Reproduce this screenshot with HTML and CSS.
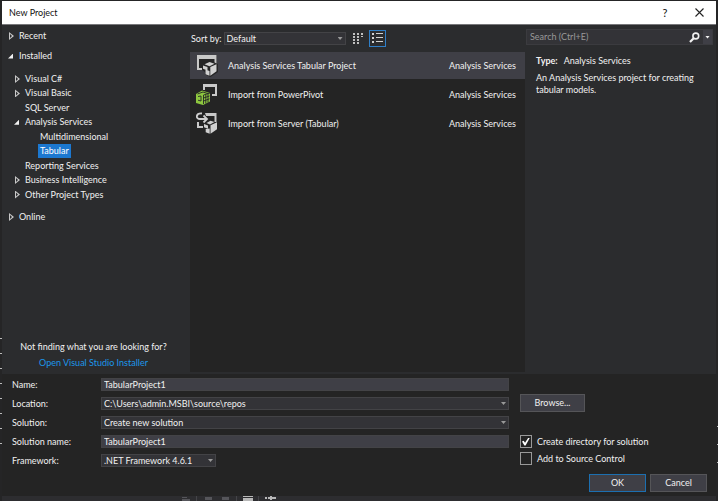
FILE: index.html
```html
<!DOCTYPE html>
<html lang="en">
<head>
    <meta charset="UTF-8">
    <meta name="viewport" content="width=device-width, initial-scale=1.0">
    <title>New Project</title>
    <link rel="stylesheet" href="styles.css">
</head>
<body>

<form class="dialog" id="newProjectForm">
    <header class="titlebar">
        <h1>New Project</h1>
        <button type="button" class="title-button" aria-label="Help">?</button>
        <button type="button" class="title-button" aria-label="Close">
            <svg width="9" height="9" viewBox="0 0 9 9"><path d="M.5.5l8 8M8.5.5l-8 8" fill="none" stroke="#222" stroke-width="1.1"/></svg>
        </button>
    </header>

    <div class="main">
        <nav class="sidebar">
            <button type="button" class="node closed">Recent</button>
            <button type="button" class="node open">Installed</button>
            <ul class="tree">
                <li><button type="button" class="node closed">Visual C#</button></li>
                <li><button type="button" class="node closed">Visual Basic</button></li>
                <li><button type="button" class="node">SQL Server</button></li>
                <li><button type="button" class="node open">Analysis Services</button></li>
                <li class="child"><button type="button" class="node">Multidimensional</button></li>
                <li class="child"><button type="button" class="node"><span class="selected">Tabular</span></button></li>
                <li><button type="button" class="node">Reporting Services</button></li>
                <li><button type="button" class="node closed">Business Intelligence</button></li>
                <li><button type="button" class="node closed">Other Project Types</button></li>
            </ul>
            <button type="button" class="node closed">Online</button>

            <div class="installer">
                <p>Not finding what you are looking for?</p>
                <a href="#">Open Visual Studio Installer</a>
            </div>
        </nav>

        <section class="templates">
            <div class="toolbar">
                <label for="sort_by">Sort by:</label>
                <div class="select sort">
                    <select id="sort_by" name="sort_by">
                        <option>Default</option>
                    </select>
                </div>
                <button type="button" class="view-button" aria-label="Small icons">
                    <svg width="11" height="11" viewBox="0 0 11 11" fill="#c0c0c0"><path d="M0 0h2v2H0zM4 0h2v2H4zM8 0h2v2H8zM0 3h2v2H0zM4 3h2v2H4zM8 3h2v1H8zM0 6h2v2H0zM4 6h2v2H4zM0 9h2v2H0zM4 9h2v2H4z"/></svg>
                </button>
                <button type="button" class="view-button active" aria-label="List">
                    <svg width="11" height="11" viewBox="0 0 11 11" fill="#d0d0d0"><path d="M0 0h2v2H0zM0 4h2v2H0zM0 8h2v2H0zM4 0h7v1H4zM4 4h7v1H4zM4 8h7v1H4z"/></svg>
                </button>
            </div>
            <ul class="template-list">
                <li>
                    <button type="button" class="template active">
                        <svg class="icon" width="22" height="23" viewBox="0 0 22 23">
                            <path d="M1 1h20v14H1z" fill="#252526"/>
                            <path d="M1 1h19.500v10h-2V5H3v9h4v2H1z" fill="#c8c8c8"/>
                            <path d="M6 10l7.500-3.500L22 10v8l-7.500 5L9 20.500V18l-3-2z" fill="#252526"/>
                            <path d="M8.500 10.300l5-2.300 5 1.700-5 2.600zM7 11.500l4.500 1.600v3.400L7 14.800zM14.300 13l6.200-2.800v7l-6.200 4.600z" fill="#d0d0d0"/>
                            <path d="M9.500 15.500l4 1.500v4.800l-4-1.600z" fill="#d0d0d0"/>
                        </svg>
                        <span class="name">Analysis Services Tabular Project</span>
                        <span>Analysis Services</span>
                    </button>
                </li>
                <li>
                    <button type="button" class="template">
                        <svg class="icon" width="22" height="23" viewBox="0 0 22 23">
                            <path d="M7 1h14v12h-5v-2h3V4H9v3H7z" fill="#c8c8c8"/>
                            <path d="M0 11l6-3.500L14 10v8.500L7 22l-7-2z" fill="#8dc63f"/>
                            <path d="M1.500 11L7 9l5 1.600M7.500 12L14 10M7.500 12v9M9.800 11.500v9M12 11v8.500M7.500 15l6-2M7.500 18l6-2.200M2 13.500l3-.5v5l-3-.8" fill="none" stroke="#252526" stroke-width=".9"/>
                        </svg>
                        <span class="name">Import from PowerPivot</span>
                        <span>Analysis Services</span>
                    </button>
                </li>
                <li>
                    <button type="button" class="template">
                        <svg class="icon" width="22" height="23" viewBox="0 0 22 23">
                            <path d="M9 1h11.500v9h-2V4H10zM1 10h2v4h4v2H1z" fill="#c8c8c8"/>
                            <path d="M6 1.500C-.5 1-.5 7 4 7h6M7.500 3.500L11 7l-3.500 3.500" fill="none" stroke="#d0d0d0" stroke-width="1.800"/>
                            <path d="M10.500 11l4-2.300 4 1.400-4.500 2.500zM8 12l4 1.500v3.300l-4-1.600zM14.500 13.200l6.500-3v7l-6.500 4.500z" fill="#d0d0d0"/>
                            <path d="M9.700 17l4-.500v5.300l-4-1.600z" fill="#d0d0d0"/>
                        </svg>
                        <span class="name">Import from Server (Tabular)</span>
                        <span>Analysis Services</span>
                    </button>
                </li>
            </ul>
        </section>

        <aside class="details">
            <div class="search">
                <input type="search" placeholder="Search (Ctrl+E)" aria-label="Search">
                <button type="button" class="search-button" aria-label="Search">
                    <svg width="11" height="11" viewBox="0 0 11 11" fill="none" stroke="#f1f1f1"><circle cx="6.800" cy="4" r="2.900" stroke-width="1.600"/><path d="M4.700 6.200L1 10" stroke-width="2.200"/></svg>
                </button>
                <button type="button" class="search-menu" aria-label="Search options"></button>
            </div>
            <div class="description">
                <p><strong>Type:</strong> Analysis Services</p>
                <p>An Analysis Services project for creating tabular models.</p>
            </div>
        </aside>
    </div>

    <div class="settings">
        <div class="fields">
            <label for="name">Name:</label>
            <input type="text" id="name" name="name" value="TabularProject1">

            <label for="location">Location:</label>
            <div class="select">
                <select id="location" name="location">
                    <option>C:\Users\admin.MSBI\source\repos</option>
                </select>
            </div>

            <label for="solution">Solution:</label>
            <div class="select">
                <select id="solution" name="solution">
                    <option>Create new solution</option>
                </select>
            </div>

            <label for="solution_name">Solution name:</label>
            <input type="text" id="solution_name" name="solution_name" value="TabularProject1">

            <label for="framework">Framework:</label>
            <div class="select framework">
                <select id="framework" name="framework">
                    <option>.NET Framework 4.6.1</option>
                </select>
            </div>
        </div>

        <div class="actions">
            <button type="button" class="button browse">Browse...</button>
            <label class="check"><input type="checkbox" name="create_directory" checked> Create directory for solution</label>
            <label class="check"><input type="checkbox" name="source_control"> Add to Source Control</label>
            <div class="buttons">
                <button type="submit" class="button primary">OK</button>
                <button type="button" class="button">Cancel</button>
            </div>
        </div>
    </div>
</form>

<!-- Editor toolbar showing under the dialog -->
<div class="backdrop">
    <svg width="110" height="5" viewBox="0 0 110 5">
        <path d="M4 1h5v1H4zM4 3h8v2H4zM27 1h7v3h-7zM44 1h7v3h-7z" fill="#55555a"/>
        <path d="M65 0h10v1H65zM65 2h10v3H65zM87 1h2v2h-2zM90 1h8v2h-8zM92 0h2v4h-2z" fill="#b8b8b8"/>
        <path d="M18 0h1v5h-1zM58 0h1v5h-1zM80 0h1v5h-1z" fill="#444448"/>
    </svg>
</div>

<script>
    // Nothing is created here, keep the dialog on screen
    document.getElementById('newProjectForm').onsubmit = function(e) {
        e.preventDefault();
    };
</script>

</body>
</html>
```
FILE: styles.css
```css
/* Global styles */

* {
  box-sizing: border-box;
  margin: 0;
  padding: 0;
}

body {
  display: flex;
  flex-direction: column;
  min-height: 100vh;
  padding: 1px 2px 0;
  font-family: Lato, "Segoe UI", sans-serif;
  font-size: 9px;
  line-height: 12px;
  color: #f1f1f1;
  /* Editor lines showing at the left and right of the dialog */
  background:
    repeating-linear-gradient(#bbb 0 1px, transparent 1px 15px) left bottom 55px / 2px 108px no-repeat,
    repeating-linear-gradient(#bbb 0 1px, transparent 1px 18px) right bottom 37px / 1px 38px no-repeat,
    #252526;
}

button, input, select {
  font: inherit;
  color: inherit;
  background: none;
  border: none;
  border-radius: 0;
}

ul {
  list-style: none;
}

svg {
  display: block;
}

.dialog {
  display: flex;
  flex-direction: column;
  flex: 1;
  background-color: #242424;
}

/* Title bar */

.titlebar {
  display: flex;
  align-items: center;
  height: 24px;
  padding-left: 7px;
  color: #111;
  background-color: #fff;
  border-bottom: 1px solid #77777a;
}

.titlebar h1 {
  flex: 1;
  font-size: 9px;
  font-weight: normal;
}

.title-button {
  display: flex;
  align-items: center;
  justify-content: center;
  width: 34px;
  height: 23px;
  font-size: 11px;
}

/* Main area */

.main {
  display: grid;
  grid-template-columns: 186px 1fr 191px;
  flex: 1;
  background-color: #2b2c2e;
}

.sidebar {
  display: flex;
  flex-direction: column;
  align-items: flex-start;
  padding: 4px 0 5px 5px;
}

.node {
  display: flex;
  align-items: center;
  height: 14px;
  white-space: nowrap;
}

.sidebar > .node + .node {
  margin-top: 6px;
}

.node::before {
  content: "";
  width: 12px;
}

.node.closed::before {
  width: 5px;
  height: 8px;
  margin: 0 5px 0 2px;
  background-color: #c8c8c8;
  clip-path: polygon(evenodd, 0 0, 100% 50%, 0 100%, 0 0, 1px 2px, 1px 6px, 3px 4px, 1px 2px);
}

.node.open::before {
  width: 5px;
  height: 5px;
  margin: 0 6px 0 1px;
  background-color: #f1f1f1;
  clip-path: polygon(100% 0, 100% 100%, 0 100%);
}

.tree {
  display: grid;
  grid-auto-rows: 1fr;
  height: 130px;
  margin: 9px 0 8px 6px;
}

.child {
  padding-left: 15px;
}

.selected {
  margin-left: -2px;
  padding: 0 2px;
  line-height: 14px;
  color: #fff;
  background-color: #1c78d0;
}

.installer {
  display: flex;
  flex-direction: column;
  align-items: center;
  gap: 4px;
  width: 100%;
  margin-top: auto;
  padding-right: 8px;
}

.installer a {
  color: #1c97ea;
  text-decoration: none;
}

/* Template list */

.templates {
  display: flex;
  flex-direction: column;
  padding: 0 0 2px 2px;
}

.toolbar {
  display: flex;
  align-items: center;
  height: 27px;
  padding-left: 1px;
}

.sort {
  width: 122px;
  margin: 0 4px 0 2px;
}

.view-button {
  display: flex;
  align-items: center;
  justify-content: center;
  width: 17px;
  height: 17px;
  margin-right: 2px;
}

.view-button.active {
  border: 1px solid #2f7fc8;
}

.template-list {
  display: flex;
  flex-direction: column;
  flex: 1;
  gap: 2px;
  background-color: #242424;
}

.template {
  display: flex;
  align-items: center;
  width: 100%;
  height: 27px;
  padding: 0 9px 0 6px;
}

.template.active {
  background-color: #3f3f46;
}

.icon {
  margin-right: 10px;
}

.name {
  flex: 1;
  text-align: left;
}

/* Search and description */

.search {
  display: flex;
  height: 16px;
  margin: 4px 3px 0 1px;
  background-color: #333337;
  border: 1px solid #3b3b3f;
}

.search input {
  flex: 1;
  min-width: 0;
  padding-left: 3px;
}

.search input::placeholder {
  color: #999;
}

.search-button {
  width: 14px;
}

.search-menu {
  display: flex;
  align-items: center;
  justify-content: center;
  width: 9px;
  background-color: #3f3f46;
}

.search-menu::before,
.select::after {
  content: "";
  width: 5px;
  height: 3px;
  background-color: #f1f1f1;
  clip-path: polygon(0 0, 100% 0, 50% 100%);
}

.description {
  display: flex;
  flex-direction: column;
  gap: 5px;
  padding: 10px 4px 0 11px;
}

.description strong {
  margin-right: 4px;
}

/* Settings */

.settings {
  display: grid;
  grid-template-columns: 1fr 187px;
  gap: 11px;
  padding: 4px 9px 4px 10px;
}

.fields {
  display: grid;
  grid-template-columns: 89px 1fr;
  grid-auto-rows: 13px;
  align-items: center;
  row-gap: 6px;
}

.fields input {
  height: 13px;
  padding: 0 2px;
  background-color: #3f3f46;
  border: 1px solid #434346;
}

.select {
  display: grid;
  align-items: center;
}

.select select {
  grid-area: 1 / 1;
  width: 100%;
  height: 13px;
  padding: 0 2px;
  line-height: 11px;
  appearance: none;
  background-color: #333337;
  border: 1px solid #434346;
}

.select::after {
  grid-area: 1 / 1;
  justify-self: end;
  margin-right: 3px;
  background-color: #999;
  pointer-events: none;
}

.framework {
  width: 115px;
}

.actions {
  display: flex;
  flex-direction: column;
  align-items: flex-start;
  gap: 4px;
  padding-top: 16px;
}

.button {
  width: 57px;
  height: 18px;
  background-color: #3f3f46;
  border: 1px solid #555558;
}

.button.primary {
  border-color: #1c6fb0;
}

.browse {
  width: 65px;
  margin-bottom: 19px;
}

.check {
  display: flex;
  align-items: center;
  gap: 5px;
}

.check input {
  display: grid;
  place-items: center;
  width: 12px;
  height: 13px;
  appearance: none;
  border: 1px solid #999;
}

.check input:checked::before {
  content: "";
  width: 8px;
  height: 8px;
  background-color: #fff;
  clip-path: polygon(0 50%, 20% 40%, 38% 65%, 80% 0, 100% 0, 45% 100%, 30% 100%);
}

.buttons {
  display: flex;
  gap: 4px;
  margin: 5px 0 0 auto;
}

/* Strip under the dialog */

.backdrop {
  height: 5px;
  padding-left: 176px;
  background-color: #2d2d30;
}
```
